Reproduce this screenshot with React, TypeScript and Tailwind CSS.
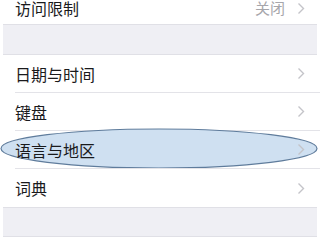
const font = { fontFamily: '"Noto Sans CJK SC", "Noto Sans", sans-serif' };

function Chevron() {
  return (
    <svg width="8" height="13" viewBox="0 0 8 13" className="shrink-0">
      <path d="M1.5 1.5 L6.5 6.5 L1.5 11.5" fill="none" stroke="#c4c4c9" strokeWidth="1.4" />
    </svg>
  );
}

function Row({ label, last, children }: { label: string; last?: boolean; children?: React.ReactNode }) {
  return (
    <div className="relative h-[38px] pl-[15px]">
      {children}
      <div className={`relative flex h-full items-center pr-[15px] ${last ? "" : "border-b border-[#e3e3e8]"}`}>
        <span className="flex-1 text-[16px] text-[#1a1a1c]">{label}</span>
        <Chevron />
      </div>
    </div>
  );
}

export default function App() {
  return (
    <div className="h-[240px] w-[320px] overflow-hidden bg-white" style={font}>
      {/* row scrolled partly off the top */}
      <div className="flex h-[24px] items-start pl-[15px] pr-[15px]">
        <span className="flex-1 text-[16px] leading-[16px] text-[#1a1a1c]">访问限制</span>
        <span className="mr-[12px] text-[15px] leading-[16px] text-[#a6a6ab]">关闭</span>
        <div className="flex h-[16px] items-center">
          <Chevron />
        </div>
      </div>
      <div className="mx-[3px] h-[31px] border-y border-[#e0e0e6] bg-[#efeff4]" />
      <div className="bg-white">
        <Row label="日期与时间" />
        <Row label="键盘" />
        <Row label="语言与地区">
          <svg className="absolute -top-[3px] left-0 h-[41px] w-[320px]" viewBox="0 0 320 41">
            <ellipse cx="159" cy="20.5" rx="158" ry="19.5" fill="#cfe0f1" stroke="#5f7c9c" strokeWidth="1.2" />
          </svg>
        </Row>
        <Row label="词典" last />
      </div>
      <div className="mx-[3px] h-[30px] border-y border-[#e0e0e6] bg-[#efeff4]" />
    </div>
  );
}
